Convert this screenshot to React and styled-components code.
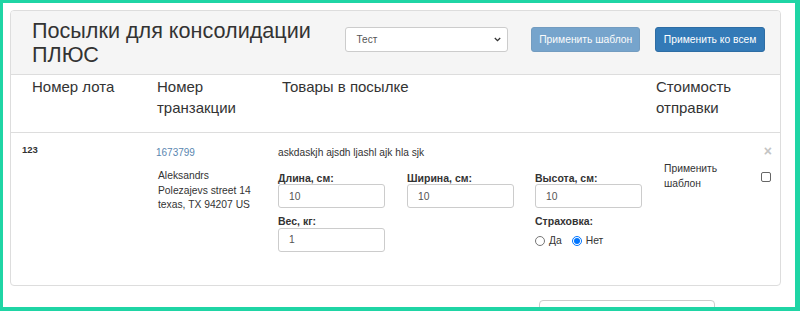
import React from "react";
import styled, { createGlobalStyle } from "styled-components";

const Global = createGlobalStyle`
  html, body { margin: 0; padding: 0; background: #fff; }
  body { font-family: "Liberation Sans", Arial, sans-serif; color: #333; }
  * { box-sizing: border-box; }
`;

const Frame = styled.div`
  width: 800px;
  height: 311px;
  border-style: solid;
  border-color: #1fd5a5;
  border-width: 3px 5px 4px 3px;
  background: #fff;
  overflow: hidden;
  padding: 7px 14px 0 7px;
`;

const Panel = styled.div`
  border: 1px solid #ddd;
  border-radius: 4px;
  background: #fff;
`;

const Heading = styled.div`
  display: flex;
  align-items: flex-start;
  background: #f5f5f5;
  border-bottom: 1px solid #ddd;
  border-radius: 3px 3px 0 0;
  padding: 8px 15px 8px 21px;
`;

const Title = styled.h3`
  margin: 0;
  width: 313px;
  font-size: 21.6px;
  line-height: 23.5px;
  font-weight: 400;
  color: #333;
`;

const Select = styled.div`
  margin-top: 8px;
  width: 164px;
  height: 25px;
  border: 1px solid #ccc;
  border-radius: 3px;
  background: #fff;
  display: flex;
  align-items: center;
  justify-content: space-between;
  padding: 0 6px 0 11px;
  font-size: 10px;
  color: #555;
`;

const Button = styled.button`
  margin-top: 8px;
  margin-left: ${(p) => p.$gap}px;
  width: ${(p) => p.$w}px;
  height: 25px;
  border: 1px solid #2e6da4;
  border-radius: 3px;
  background: #337ab7;
  color: #fff;
  font-family: "Liberation Sans", Arial, sans-serif;
  font-size: 10.3px;
  padding: 0;
  opacity: ${(p) => (p.$disabled ? 0.65 : 1)};
`;

const HeadRow = styled.div`
  display: grid;
  grid-template-columns: 125px 125px 374px 110px;
  padding: 1px 0 14px 21px;
  border-bottom: 1px solid #ddd;
  font-size: 15px;
  line-height: 21px;
  color: #333;
`;

const HeadCell = styled.div``;

const BodyRow = styled.div`
  position: relative;
  display: grid;
  grid-template-columns: 134px 122px 386px 1fr;
  height: 152px;
  padding: 10px 0 0 11px;
  font-size: 10.3px;
  color: #333;
`;

const LotNo = styled.div`
  font-size: 9.5px;
  font-weight: 700;
  line-height: 14px;
`;

const TxCell = styled.div`
  padding-top: 3px;
`;

const TxLink = styled.a`
  display: block;
  font-size: 10px;
  line-height: 14px;
  color: #5a86b0;
  text-decoration: none;
`;

const Address = styled.div`
  margin-top: 9px;
  padding-left: 2px;
  font-size: 10.3px;
  line-height: 14.7px;
`;

const Goods = styled.div`
  padding-top: 2.5px;
`;

const GoodsText = styled.div`
  font-size: 10.2px;
  line-height: 14px;
`;

const FieldGrid = styled.div`
  margin-top: 13px;
  display: grid;
  grid-template-columns: 129px 128px 128px;
  row-gap: 8px;
`;

const Field = styled.div``;

const Label = styled.div`
  font-weight: 700;
  font-size: 10.5px;
  line-height: 11.5px;
`;

const Input = styled.div`
  width: 107px;
  height: 24px;
  border: 1px solid #ccc;
  border-radius: 3px;
  background: #fff;
  display: flex;
  align-items: center;
  padding-left: 10px;
  font-size: 10.3px;
  color: #555;
`;

const RadioRow = styled.div`
  display: flex;
  align-items: center;
  height: 24px;
  margin-top: 1px;
`;

const RadioOpt = styled.label`
  display: flex;
  align-items: center;
  margin-right: 10px;
  font-size: 10.3px;
`;

const RadioDot = styled.span`
  width: 10px;
  height: 10px;
  border-radius: 50%;
  border: 1px solid ${(p) => (p.$on ? "#0075ff" : "#767676")};
  margin-right: 4px;
  display: flex;
  align-items: center;
  justify-content: center;
  background: #fff;
  &::after {
    content: "";
    width: 6px;
    height: 6px;
    border-radius: 50%;
    background: ${(p) => (p.$on ? "#0075ff" : "transparent")};
  }
`;

const TemplateCell = styled.div`
  display: flex;
  align-items: center;
  padding-top: 17.5px;
  align-self: start;
`;

const TemplateText = styled.div`
  width: 97px;
  line-height: 15px;
  font-size: 10.3px;
`;

const Check = styled.span`
  width: 10px;
  height: 10px;
  border: 1px solid #666;
  border-radius: 2px;
  background: #fff;
  margin-top: 3px;
`;

const Close = styled.span`
  position: absolute;
  right: 8px;
  top: 11px;
  font-size: 14px;
  font-weight: 700;
  line-height: 14px;
  color: #c4c4c4;
`;

const Footer = styled.div`
  display: flex;
  padding: 14px 0 0 529px;
`;

const FooterBox = styled.div`
  width: 176px;
  height: 30px;
  border: 1px solid #ccc;
  border-radius: 4px;
  background: #fff;
`;

const Chevron = () => (
  <svg width="7" height="5" viewBox="0 0 7 5">
    <path d="M0.8 1 L3.5 3.7 L6.2 1" fill="none" stroke="#333" strokeWidth="1.3" />
  </svg>
);

export default function App() {
  return (
    <>
      <Global />
      <Frame>
        <Panel>
          <Heading>
            <Title>Посылки для консолидации ПЛЮС</Title>
            <Select>
              <span>Тест</span>
              <Chevron />
            </Select>
            <Button $gap={23} $w={109} $disabled>Применить шаблон</Button>
            <Button $gap={15} $w={110}>Применить ко всем</Button>
          </Heading>
          <HeadRow>
            <HeadCell>Номер лота</HeadCell>
            <HeadCell>Номер<br />транзакции</HeadCell>
            <HeadCell>Товары в посылке</HeadCell>
            <HeadCell>Стоимость<br />отправки</HeadCell>
          </HeadRow>
          <BodyRow>
            <LotNo>123</LotNo>
            <TxCell>
              <TxLink href="#">1673799</TxLink>
              <Address>
                Aleksandrs<br />
                Polezajevs street 14<br />
                texas, TX 94207 US
              </Address>
            </TxCell>
            <Goods>
              <GoodsText>askdaskjh ajsdh ljashl ajk hla sjk</GoodsText>
              <FieldGrid>
                <Field>
                  <Label>Длина, см:</Label>
                  <Input>10</Input>
                </Field>
                <Field>
                  <Label>Ширина, см:</Label>
                  <Input>10</Input>
                </Field>
                <Field>
                  <Label>Высота, см:</Label>
                  <Input>10</Input>
                </Field>
                <Field>
                  <Label>Вес, кг:</Label>
                  <Input>1</Input>
                </Field>
                <Field />
                <Field>
                  <Label>Страховка:</Label>
                  <RadioRow>
                    <RadioOpt><RadioDot />Да</RadioOpt>
                    <RadioOpt><RadioDot $on />Нет</RadioOpt>
                  </RadioRow>
                </Field>
              </FieldGrid>
            </Goods>
            <TemplateCell>
              <TemplateText>Применить<br />шаблон</TemplateText>
              <Check />
            </TemplateCell>
            <Close>×</Close>
          </BodyRow>
        </Panel>
        <Footer>
          <FooterBox />
        </Footer>
      </Frame>
    </>
  );
}
